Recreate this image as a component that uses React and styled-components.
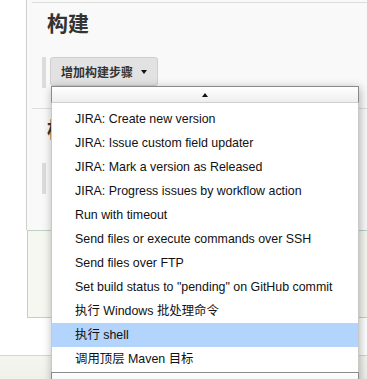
import React from 'react';
import styled, { createGlobalStyle } from 'styled-components';

const GlobalStyle = createGlobalStyle`
    html, body {
        margin: 0;
        padding: 0;
        background: #fff;
        font-family: "Liberation Sans", "Noto Sans CJK SC", sans-serif;
    }
`;

const Page = styled.div`
    width: 367px;
    height: 379px;
    overflow: hidden;
    display: flex;
    flex-direction: column;
`;

const Main = styled.div`
    display: flex;
    height: 318px;
`;

const Gutter = styled.div`
    width: 26px;
    flex-shrink: 0;
    background: #fff;
`;

const Panel = styled.div`
    flex: 1;
    display: flex;
    flex-direction: column;
`;

const Content = styled.div`
    height: 230px;
    border-left: 1px solid #cfcfcf;
    background: #f9f9f9;
    padding-top: 2px;
    box-sizing: border-box;
`;

const Section = styled.div`
    margin-left: 5px;
    border-top: 1px solid #ddd;
    height: 105px;
`;

const Title = styled.h2`
    margin: 0;
    padding: 7px 0 0 15px;
    font-size: 21px;
    line-height: 28px;
    font-weight: bold;
    color: #333;
    font-family: "Liberation Sans", "Noto Sans CJK SC", sans-serif;
`;

const ButtonRow = styled.div`
    position: relative;
    display: flex;
    align-items: flex-start;
    gap: 4px;
    margin: 19px 0 0 10px;
`;

const SideBar = styled.div`
    width: 4px;
    height: 31px;
    background: #dcdcdc;
`;

const AddButton = styled.div`
    display: flex;
    align-items: center;
    gap: 8px;
    height: 27px;
    padding: 0 10px;
    border: 1px solid #cfcfcf;
    border-radius: 3px;
    background: #e2e2e2;
    color: #333;
    font-size: 12px;
    font-weight: bold;
    font-family: "Noto Sans CJK SC", sans-serif;
`;

const Caret = styled.span`
    width: 0;
    height: 0;
    border-left: 3.5px solid transparent;
    border-right: 3.5px solid transparent;
    border-${p => (p.$up ? 'bottom' : 'top')}: 4px solid #111;
`;

const Sticker = styled.div`
    height: 88px;
    margin-left: 1px;
    box-sizing: border-box;
    border: 1px solid #bcd3c5;
    border-right: none;
    background: #f5f7f0;
`;

const Spacer = styled.div`
    height: 37px;
    background: #fff;
`;

const Footer = styled.div`
    flex: 1;
    border-top: 1px solid #d4d6d0;
    background: linear-gradient(#f4f6ef, #eef0e9);
`;

const Menu = styled.div`
    position: absolute;
    left: 9px;
    top: 29px;
    width: 308px;
    z-index: 10;
    box-shadow: 1px 2px 9px rgba(0, 0, 0, 0.3);
`;

const ScrollBox = styled.div`
    height: 15px;
    display: flex;
    align-items: center;
    justify-content: center;
    border: 1px solid #8a8a8a;
    border-bottom: ${p => (p.$bottom ? 'none' : '1px solid #cfcfcf')};
    background: linear-gradient(#ffffff, #eeeeee);
`;

const List = styled.ul`
    list-style: none;
    margin: 0;
    padding: 4px 0 1px;
    background: #fff;
    border-left: 1px solid #c8c8c8;
    border-right: 1px solid #c8c8c8;
`;

const Item = styled.li`
    height: 24px;
    line-height: 24px;
    padding-left: 23px;
    font-size: 12.4px;
    color: #111;
    white-space: nowrap;
    background: ${p => (p.$active ? '#b3d4fc' : 'transparent')};
`;

const steps = [
    'JIRA: Create new version',
    'JIRA: Issue custom field updater',
    'JIRA: Mark a version as Released',
    'JIRA: Progress issues by workflow action',
    'Run with timeout',
    'Send files or execute commands over SSH',
    'Send files over FTP',
    'Set build status to "pending" on GitHub commit',
    '执行 Windows 批处理命令',
    '执行 shell',
    '调用顶层 Maven 目标',
];

const App = () => (
    <Page>
        <GlobalStyle />
        <Main>
            <Gutter />
            <Panel>
                <Content>
                    <Section>
                        <Title>构建</Title>
                        <ButtonRow>
                            <SideBar />
                            <AddButton>
                                增加构建步骤
                                <Caret />
                            </AddButton>
                            <Menu>
                                <ScrollBox>
                                    <Caret $up />
                                </ScrollBox>
                                <List>
                                    {steps.map((s, i) => (
                                        <Item key={s} $active={i === 9}>{s}</Item>
                                    ))}
                                </List>
                                <ScrollBox $bottom>
                                    <Caret />
                                </ScrollBox>
                            </Menu>
                        </ButtonRow>
                    </Section>
                    <Section>
                        <Title>构</Title>
                        <ButtonRow>
                            <SideBar />
                        </ButtonRow>
                    </Section>
                </Content>
                <Sticker />
            </Panel>
        </Main>
        <Spacer />
        <Footer />
    </Page>
);

export default App;
